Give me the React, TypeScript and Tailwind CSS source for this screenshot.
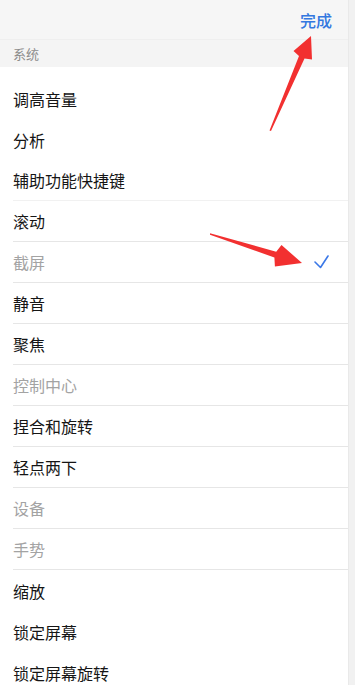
import React from "react";

type Item = { label: string; muted?: boolean; divider?: "none" | "faint" | "line" };

const ITEMS: Item[] = [
  { label: "调高音量", divider: "none" },
  { label: "分析", divider: "none" },
  { label: "辅助功能快捷键", divider: "faint" },
  { label: "滚动", divider: "line" },
  { label: "截屏", muted: true, divider: "line" },
  { label: "静音", divider: "line" },
  { label: "聚焦", divider: "line" },
  { label: "控制中心", muted: true, divider: "line" },
  { label: "捏合和旋转", divider: "line" },
  { label: "轻点两下", divider: "line" },
  { label: "设备", muted: true, divider: "line" },
  { label: "手势", muted: true, divider: "line" },
  { label: "缩放", divider: "none" },
  { label: "锁定屏幕", divider: "none" },
  { label: "锁定屏幕旋转", divider: "none" },
];

export default function App() {
  return (
    <div className="relative flex w-[355px] h-[685px] overflow-hidden bg-white font-['PingFang_SC','Noto_Sans_CJK_SC',sans-serif]">
      <div className="flex flex-col flex-1 min-w-0">
        <header className="shrink-0 h-[40px] flex items-center justify-end pr-[16px] bg-[#f6f6f6] border-b border-[#efefef]">
          <button className="text-[16px] font-medium text-[#3478e0] leading-none">完成</button>
        </header>
        <div className="shrink-0 h-[27px] flex items-center px-[13px] bg-[#f4f4f4] text-[13px] text-[#8c8c8c]">
          系统
        </div>
        <ul className="shrink-0 bg-white pt-[11px]">
          {ITEMS.map((item) => (
            <li
              key={item.label}
              className={`ml-[13px] h-[41px] flex items-center justify-between pr-[20px] ${
                item.divider === "line"
                  ? "border-b border-[#e6e6e6]"
                  : item.divider === "faint"
                  ? "border-b border-[#f1f1f1]"
                  : ""
              }`}
            >
              <span className={`text-[16px] ${item.muted ? "text-[#a3a3a3]" : "text-[#151515]"}`}>
                {item.label}
              </span>
              {item.label === "截屏" && (
                <svg width="16" height="14" viewBox="0 0 16 14" className="mr-[-1px]">
                  <polyline
                    points="2,7 7.5,12.5 15,1"
                    fill="none"
                    stroke="#3b78e7"
                    strokeWidth="1.6"
                    strokeLinecap="round"
                    strokeLinejoin="round"
                  />
                </svg>
              )}
            </li>
          ))}
        </ul>
      </div>
      <div className="shrink-0 w-[7px] bg-[#f1f1f1] border-l border-[#e9e9e9]" />

      {/* annotation arrows */}
      <svg className="absolute inset-0 pointer-events-none" width="355" height="685" viewBox="0 0 355 685">
        <polygon
          points="269.5,130.5 299,56 293.5,51 311,36 312,59.5 304.5,58.5 271,131"
          fill="#f23030"
        />
        <polygon
          points="210,233.3 276.2,251.7 281.5,245 302,263 274.9,266.5 274.4,257.5 210,234.7"
          fill="#f23030"
        />
      </svg>
    </div>
  );
}
